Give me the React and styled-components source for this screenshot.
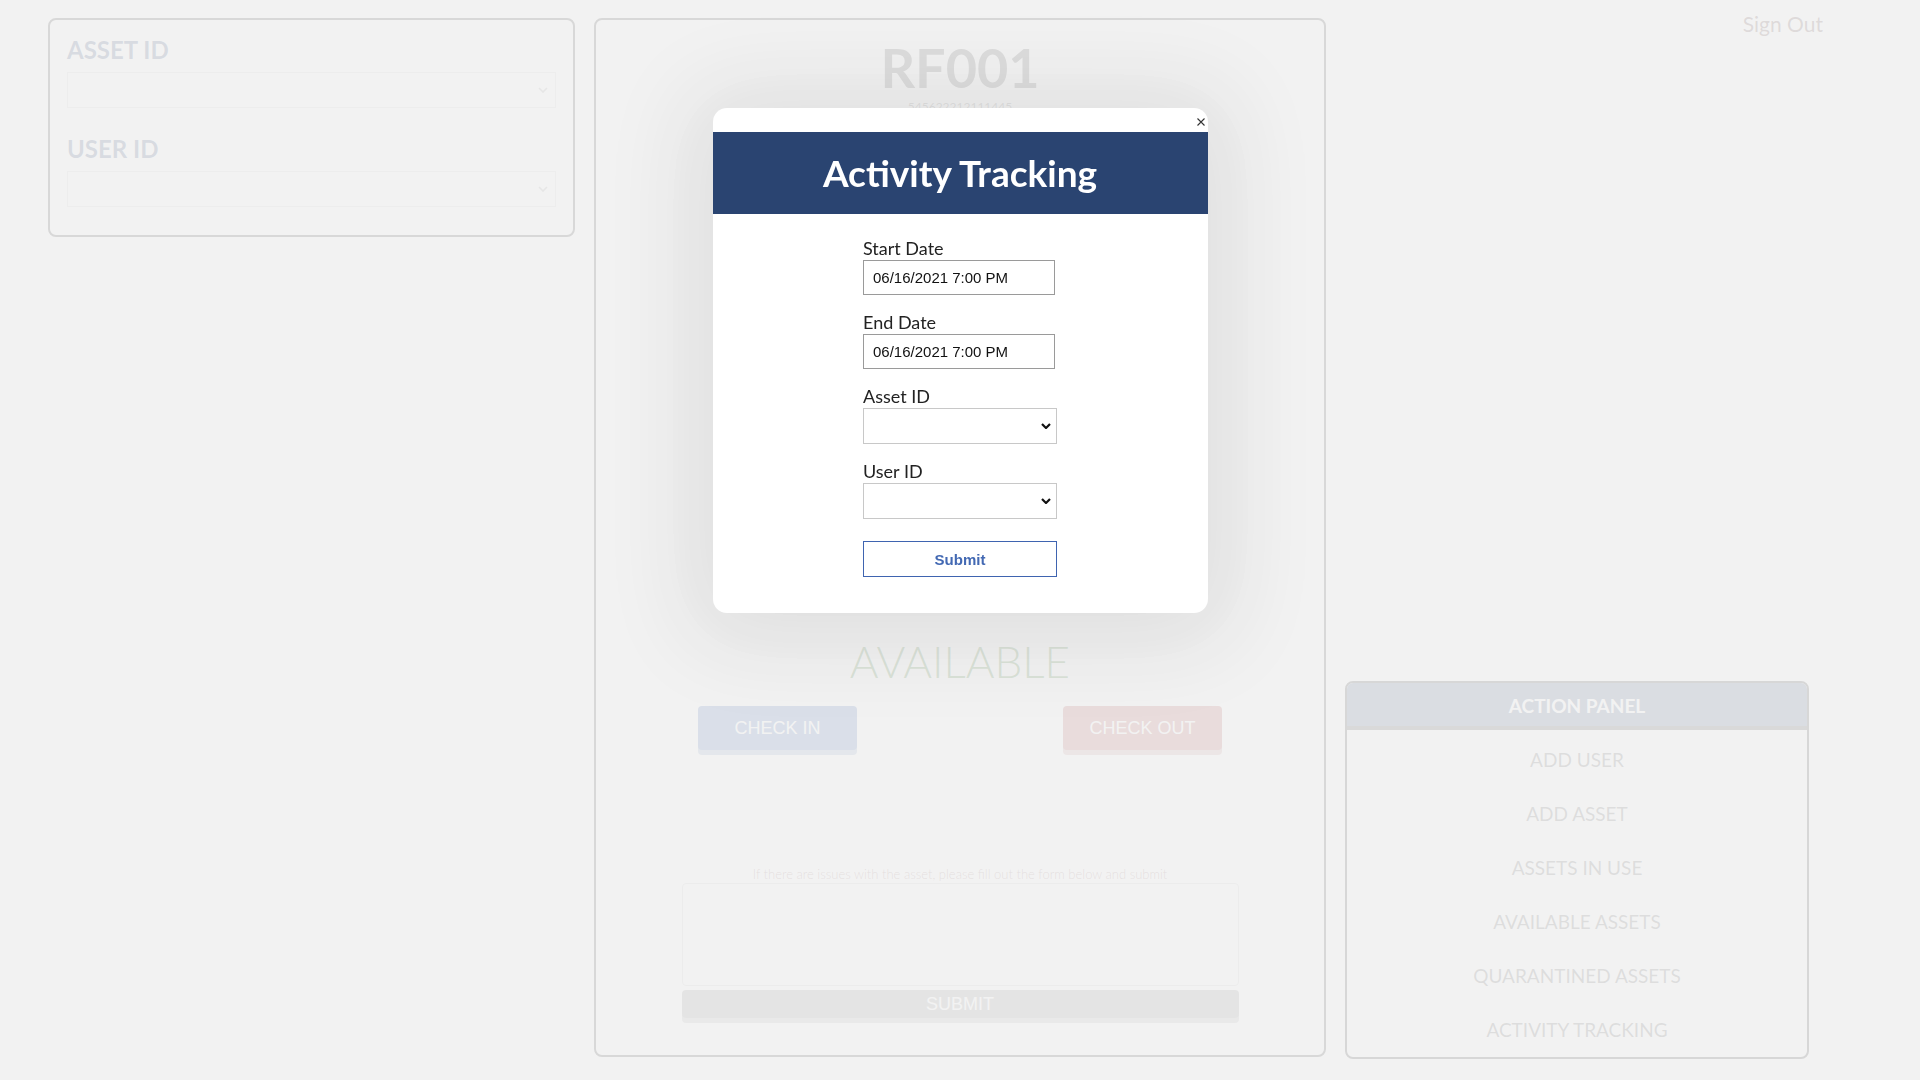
import styled, { createGlobalStyle } from 'styled-components';

const GlobalStyle = createGlobalStyle`
  html, body {
    margin: 0;
    padding: 0;
    background: #ffffff;
  }
  body {
    font-family: Lato, "Open Sans", sans-serif;
  }
  * {
    box-sizing: border-box;
  }
`;

const Page = styled.div`
  width: 1920px;
  height: 1080px;
  display: flex;
  align-items: flex-start;
  padding-left: 48px;
  overflow: hidden;
`;

/* ---------- left lookup card ---------- */

const LookupCard = styled.div`
  margin-top: 18px;
  width: 527px;
  border: 2px solid #2b2b2b;
  border-radius: 8px;
  padding: 15px 17px 28px;
  display: flex;
  flex-direction: column;
  gap: 26px;
`;

const LookupLabel = styled.label`
  display: block;
  font-size: 24px;
  font-weight: 700;
  line-height: 29px;
  color: #2a4471;
  margin-bottom: 8px;
`;

const SelectShell = styled.div`
  position: relative;
  width: ${(p) => p.$width || '100%'};
`;

const PlainSelect = styled.select`
  display: block;
  width: 100%;
  height: 36px;
  appearance: none;
  background: #fff;
  border: 1px solid ${(p) => p.$border || '#c8c8c8'};
  border-radius: 0;
  outline: none;
  margin: 0;
`;

const Chevron = styled.svg`
  position: absolute;
  right: ${(p) => p.$right || 6}px;
  top: 50%;
  transform: translateY(-50%);
  pointer-events: none;
`;

/* ---------- centre asset card ---------- */

const AssetCard = styled.div`
  margin-top: 18px;
  margin-left: 19px;
  width: 732px;
  height: 1039px;
  border: 2px solid #2b2b2b;
  border-radius: 8px;
  display: flex;
  flex-direction: column;
  align-items: center;
  padding-top: 18px;
`;

const AssetTag = styled.h1`
  margin: 0;
  font-size: 54px;
  font-weight: 700;
  line-height: 60px;
  color: #555;
`;

const Serial = styled.div`
  margin-top: 1px;
  font-size: 12px;
  line-height: 15px;
  color: #777;
`;

const ImageSlot = styled.div`
  height: 521px;
`;

const Status = styled.div`
  font-size: 44px;
  font-weight: 300;
  line-height: 52px;
  color: #3d7a2a;
`;

const ButtonRow = styled.div`
  margin-top: 19px;
  width: 524px;
  display: flex;
  justify-content: space-between;
`;

const ActionButton = styled.button`
  width: 159px;
  height: 44px;
  border: none;
  border-radius: 4px;
  background: ${(p) => p.$bg};
  box-shadow: 0 5px 0 ${(p) => p.$shade};
  color: #fff;
  font-family: "Liberation Sans", Arial, sans-serif;
  font-size: 18px;
  padding: 0;
`;

const IssueNote = styled.div`
  margin-top: 116px;
  font-size: 13px;
  font-weight: 300;
  line-height: 16px;
  color: #8a6262;
`;

const IssueBox = styled.textarea`
  margin-top: 1px;
  width: 557px;
  height: 103px;
  border: 1px solid #cccccc;
  border-radius: 4px;
  resize: none;
  background: transparent;
  outline: none;
`;

const SubmitBar = styled.button`
  margin-top: 4px;
  width: 557px;
  height: 28px;
  border: none;
  border-radius: 4px;
  background: #8e8e8e;
  box-shadow: 0 5px 0 #b5b5b5;
  color: #fff;
  font-family: "Liberation Sans", Arial, sans-serif;
  font-size: 18px;
  line-height: 28px;
  padding: 0;
`;

/* ---------- right column ---------- */

const RightColumn = styled.div`
  flex: 1;
  margin-left: 19px;
  height: 1059px;
  display: flex;
  flex-direction: column;
`;

const SignOut = styled.a`
  align-self: flex-end;
  margin-top: 11px;
  margin-right: 97px;
  font-size: 21px;
  line-height: 25px;
  color: #5a3a3a;
  cursor: pointer;
`;

const ActionPanel = styled.div`
  margin-top: auto;
  width: 464px;
  border: 2px solid #222;
  border-radius: 8px;
  overflow: hidden;
`;

const PanelHeader = styled.div`
  height: 47px;
  padding-top: 11px;
  background: #3d5278;
  border-bottom: 4px solid #333;
  text-align: center;
  font-size: 19px;
  font-weight: 700;
  line-height: 23px;
  color: #fff;
`;

const PanelList = styled.div`
  padding-top: 3px;
`;

const PanelItem = styled.div`
  text-align: center;
  font-size: 19px;
  line-height: 54px;
  color: #555;
`;

/* ---------- modal ---------- */

const Overlay = styled.div`
  position: fixed;
  inset: 0;
  background: rgba(240, 240, 240, 0.88);
  display: flex;
  justify-content: center;
  align-items: flex-start;
  padding-top: 108px;
`;

const Modal = styled.div`
  width: 495px;
  background: #fff;
  border-radius: 14px;
  overflow: hidden;
  box-shadow: 0 6px 90px 24px rgba(0, 0, 0, 0.085);
`;

const CloseBar = styled.div`
  height: 24px;
  display: flex;
  justify-content: flex-end;
  align-items: flex-start;
  padding: 10px 3px 0 0;
`;

const CloseButton = styled.button`
  border: none;
  background: none;
  padding: 0;
  width: 8px;
  height: 8px;
  display: flex;
  cursor: pointer;
`;

const ModalHeader = styled.div`
  height: 82px;
  background: #2a4471;
  display: flex;
  align-items: center;
  justify-content: center;
`;

const ModalTitle = styled.h2`
  margin: 0;
  font-size: 37px;
  font-weight: 700;
  line-height: 44px;
  color: #fff;
`;

const ModalForm = styled.form`
  width: 194px;
  margin: 0 auto;
  padding: 23px 0 36px;
  display: flex;
  flex-direction: column;
  gap: 16px;
`;

const FormGroup = styled.div`
  display: flex;
  flex-direction: column;
`;

const FormLabel = styled.label`
  font-size: 18px;
  line-height: 22px;
  color: #222;
  margin-bottom: 1px;
`;

const DateInput = styled.input`
  width: 192px;
  height: 35px;
  border: 1px solid #9a9a9a;
  border-radius: 0;
  padding: 0 9px;
  font-family: "Liberation Sans", Arial, sans-serif;
  font-size: 15px;
  color: #111;
  outline: none;
`;

const SubmitButton = styled.button`
  margin-top: 6px;
  width: 194px;
  height: 36px;
  border: 1px solid #3f64b0;
  background: #fff;
  color: #4369b3;
  font-family: "Liberation Sans", Arial, sans-serif;
  font-size: 15px;
  font-weight: 700;
  padding: 0;
  cursor: pointer;
`;

function ChevronDown({ color = '#111', right = 6, width = 2.2 }) {
  return (
    <Chevron $right={right} width="10" height="6" viewBox="0 0 10 6">
      <polyline points="1,1 5,5 9,1" fill="none" stroke={color} strokeWidth={width} />
    </Chevron>
  );
}

const actions = [
  'ADD USER',
  'ADD ASSET',
  'ASSETS IN USE',
  'AVAILABLE ASSETS',
  'QUARANTINED ASSETS',
  'ACTIVITY TRACKING',
];

export default function App() {
  return (
    <>
      <GlobalStyle />
      <Page>
        <LookupCard>
          <div>
            <LookupLabel>ASSET ID</LookupLabel>
            <SelectShell>
              <PlainSelect $border="#d4d4d4" />
              <ChevronDown color="#9a9a9a" right={8} width={1.6} />
            </SelectShell>
          </div>
          <div>
            <LookupLabel>USER ID</LookupLabel>
            <SelectShell>
              <PlainSelect $border="#d4d4d4" />
              <ChevronDown color="#9a9a9a" right={8} width={1.6} />
            </SelectShell>
          </div>
        </LookupCard>

        <AssetCard>
          <AssetTag>RF001</AssetTag>
          <Serial>545622212111445</Serial>
          <ImageSlot />
          <Status>AVAILABLE</Status>
          <ButtonRow>
            <ActionButton $bg="#3a66b0" $shade="#8ea5cc">CHECK IN</ActionButton>
            <ActionButton $bg="#b04848" $shade="#cf9a9a">CHECK OUT</ActionButton>
          </ButtonRow>
          <IssueNote>If there are issues with the asset, please fill out the form below and submit</IssueNote>
          <IssueBox />
          <SubmitBar>SUBMIT</SubmitBar>
        </AssetCard>

        <RightColumn>
          <SignOut>Sign Out</SignOut>
          <ActionPanel>
            <PanelHeader>ACTION PANEL</PanelHeader>
            <PanelList>
              {actions.map((a) => (
                <PanelItem key={a}>{a}</PanelItem>
              ))}
            </PanelList>
          </ActionPanel>
        </RightColumn>
      </Page>

      <Overlay>
        <Modal>
          <CloseBar>
            <CloseButton aria-label="close">
              <svg width="8" height="8" viewBox="0 0 8 8">
                <path d="M0.5 0.5 L7.5 7.5 M7.5 0.5 L0.5 7.5" stroke="#333" strokeWidth="1.1" />
              </svg>
            </CloseButton>
          </CloseBar>
          <ModalHeader>
            <ModalTitle>Activity Tracking</ModalTitle>
          </ModalHeader>
          <ModalForm onSubmit={(e) => e.preventDefault()}>
            <FormGroup>
              <FormLabel>Start Date</FormLabel>
              <DateInput type="text" defaultValue="06/16/2021 7:00 PM" />
            </FormGroup>
            <FormGroup>
              <FormLabel>End Date</FormLabel>
              <DateInput type="text" defaultValue="06/16/2021 7:00 PM" />
            </FormGroup>
            <FormGroup>
              <FormLabel>Asset ID</FormLabel>
              <SelectShell $width="194px">
                <PlainSelect />
                <ChevronDown />
              </SelectShell>
            </FormGroup>
            <FormGroup>
              <FormLabel>User ID</FormLabel>
              <SelectShell $width="194px">
                <PlainSelect />
                <ChevronDown />
              </SelectShell>
            </FormGroup>
            <SubmitButton type="submit">Submit</SubmitButton>
          </ModalForm>
        </Modal>
      </Overlay>
    </>
  );
}
